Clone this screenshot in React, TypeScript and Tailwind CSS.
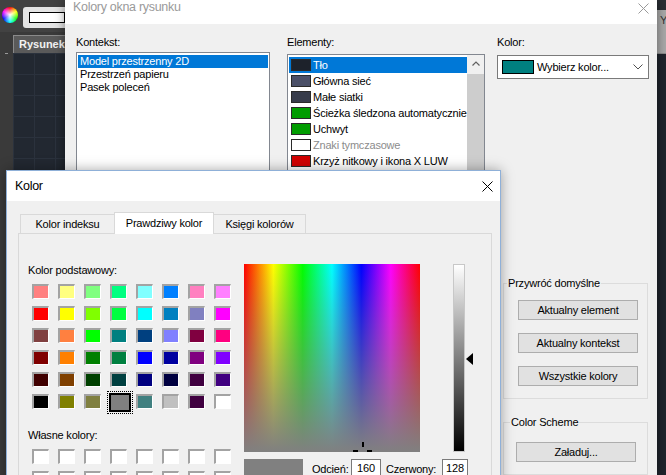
import React from 'react';

const basicColors = [
  ['#ff8080', '#ffff80', '#80ff80', '#00ff80', '#80ffff', '#0080ff', '#ff80c0', '#ff80ff'],
  ['#ff0000', '#ffff00', '#80ff00', '#00ff40', '#00ffff', '#0080c0', '#8080c0', '#ff00ff'],
  ['#804040', '#ff8040', '#00ff00', '#008080', '#004080', '#8080ff', '#800040', '#ff0080'],
  ['#800000', '#ff8000', '#008000', '#008040', '#0000ff', '#0000a0', '#800080', '#8000ff'],
  ['#400000', '#804000', '#004000', '#004040', '#000080', '#000040', '#400040', '#400080'],
  ['#000000', '#808000', '#808040', '#808080', '#408080', '#c0c0c0', '#400040', '#ffffff'],
];

const contexts = ['Model przestrzenny 2D', 'Przestrzeń papieru', 'Pasek poleceń'];

const elements = [
  { name: 'Tło', color: '#1d222b' },
  { name: 'Główna sieć', color: '#4b5068' },
  { name: 'Małe siatki', color: '#373c4b' },
  { name: 'Ścieżka śledzona automatycznie', color: '#009c00' },
  { name: 'Uchwyt', color: '#009c00' },
  { name: 'Znaki tymczasowe', color: '#ffffff', muted: true },
  { name: 'Krzyż nitkowy i ikona X LUW', color: '#d10000' },
];

const CloseIcon = ({ className }: { className?: string }) => (
  <svg width="11" height="11" viewBox="0 0 11 11" className={className}>
    <path d="M0.5 0.5 L10.5 10.5 M10.5 0.5 L0.5 10.5" stroke="currentColor" strokeWidth="1" fill="none" />
  </svg>
);

const Button = ({ children, pad }: { children: React.ReactNode; pad?: boolean }) => (
  <div className="h-[20px] w-[120px] border border-[#adadad] bg-[#e1e1e1] flex items-center justify-center">
    {children}
  </div>
);

const Backdrop = () => (
  <div className="absolute inset-0 flex">
    <div className="w-[65px] flex flex-col">
      <div className="h-[32px] flex items-start gap-[5px] pl-[2px] pt-[7px] bg-[#424242]">
        <div className="w-[16px] h-[16px] shrink-0 rounded-full bg-[radial-gradient(circle,#ffffff_0%,rgba(255,255,255,0)_70%),conic-gradient(#ff0000,#ffff00,#00ff00,#00ffff,#0000ff,#ff00ff,#ff0000)]" />
        <div className="flex-1 h-[21px] rounded-l-[3px] bg-[#e4e4e4] pl-[6px] pt-[5px]">
          <div className="h-[11px] border border-black bg-white" />
        </div>
      </div>
      <div className="flex flex-1 pt-[3px]">
        <div className="w-[13px] flex flex-col pt-[18px]">
          <div className="ml-[5px] w-[3px] h-[1px] bg-[#9a9a9a]" />
        </div>
        <div className="flex-1 flex flex-col">
          <div className="h-[18px] bg-[#5a5a5a] border-t border-l border-[#8a8a8a] text-[#f2f2f2] font-bold pl-[5px] leading-[17px] tracking-normal">
            Rysunek
          </div>
          <div className="flex-1 bg-[#222831] bg-[linear-gradient(#2b323d_1px,transparent_1px),linear-gradient(90deg,#2b323d_1px,transparent_1px)] bg-[size:21px_21px]" />
        </div>
      </div>
    </div>
    <div className="flex-1" />
    <div className="w-[9px] flex flex-col bg-[#2b2e34]">
      <div className="h-[10px]" />
      <div className="h-[43px] bg-[#a9a9a9] text-[#333] pl-[3px] pt-[4px] overflow-hidden">Y</div>
      <div className="h-[1px] bg-[#8a8a8a]" />
      <div className="flex-1 bg-[#1f242c]" />
    </div>
  </div>
);

const SettingsWindow = () => (
  <div className="absolute left-[65px] top-0 w-[592px] h-[475px] flex flex-col bg-[#f0f0f0] shadow-[0_0_10px_rgba(0,0,0,0.45)]">
    <div className="h-[24px] shrink-0 bg-white flex justify-between pl-[8px] pr-[8px]">
      <span className="text-[12.5px] leading-[15px] tracking-[-0.3px] text-[#9a9a9a]">Kolory okna rysunku</span>
      <CloseIcon className="mt-[3px] text-[#9a9a9a]" />
    </div>
    <div className="flex pl-[11px] pt-[12px]">
      <div className="w-[194px] flex flex-col">
        <span>Kontekst:</span>
        <div className="mt-[3px] h-[140px] border border-[#828790] bg-white px-[1px] pt-[2px]">
          {contexts.map((c, i) => (
            <div key={c} className={i === 0 ? 'h-[13px] pl-[2px] bg-[#0078d7] text-white' : 'h-[13px] pl-[2px]'}>
              {c}
            </div>
          ))}
        </div>
      </div>
      <div className="ml-[17px] w-[198px] flex flex-col">
        <span>Elementy:</span>
        <div className="mt-[5px] h-[140px] border border-[#828790] bg-white flex">
          <div className="flex-1 min-w-0 overflow-hidden pl-[1px] pt-[2px]">
            {elements.map((e, i) => (
              <div
                key={e.name}
                className={
                  i === 0
                    ? 'h-[16px] flex items-center pl-[2px] bg-[#0078d7] text-white'
                    : e.muted
                    ? 'h-[16px] flex items-center pl-[2px] text-[#8c8c8c]'
                    : 'h-[16px] flex items-center pl-[2px]'
                }
              >
                <div className="w-[20px] h-[12px] shrink-0 border border-[#2a2a2a]" style={{ backgroundColor: e.color }} />
                <span className="ml-[2px] whitespace-nowrap">{e.name}</span>
              </div>
            ))}
          </div>
          <div className="w-[17px] flex flex-col bg-[#f0f0f0]">
            <div className="h-[17px] flex items-center justify-center">
              <svg width="8" height="5" viewBox="0 0 8 5">
                <path d="M0.5 4.5 L4 1 L7.5 4.5" stroke="#606060" strokeWidth="1.2" fill="none" />
              </svg>
            </div>
            <div className="mt-[2px] flex-1 bg-[#cdcdcd]" />
          </div>
        </div>
      </div>
      <div className="ml-[12px] w-[152px] flex flex-col">
        <span>Kolor:</span>
        <div className="mt-[6px] h-[24px] border border-[#7a7a7a] bg-white flex items-center pl-[4px] pr-[5px]">
          <div className="w-[32px] h-[14px] border border-black bg-[#008080]" />
          <span className="ml-[3px] flex-1">Wybierz kolor...</span>
          <svg width="10" height="6" viewBox="0 0 10 6">
            <path d="M0.5 0.5 L5 5 L9.5 0.5" stroke="#505050" strokeWidth="1" fill="none" />
          </svg>
        </div>
        <fieldset className="mt-[198px] ml-[6px] w-[145px] border border-[#dcdcdc]">
          <legend className="ml-[3px] px-[1px]">Przywróć domyślne</legend>
          <div className="flex flex-col gap-[13px] pl-[14px] pt-[10px] pb-[12px]">
            <Button>Aktualny element</Button>
            <Button>Aktualny kontekst</Button>
            <Button>Wszystkie kolory</Button>
          </div>
        </fieldset>
        <fieldset className="mt-[17px] ml-[6px] w-[145px] border border-[#dcdcdc]">
          <legend className="ml-[6px] px-[1px]">Color Scheme</legend>
          <div className="pl-[12px] pt-[13px] pb-[12px]">
            <Button>Załaduj...</Button>
          </div>
        </fieldset>
      </div>
    </div>
  </div>
);

const Swatch = ({ color, selected }: { color: string; selected?: boolean }) =>
  selected ? (
    <div className="-ml-[3px] -mt-[3px] w-[26px] h-[23px] border border-dotted border-black p-[1px]">
      <div className="w-full h-full border-2 border-black" style={{ backgroundColor: color }} />
    </div>
  ) : (
    <div
      className="w-[17px] h-[15px] border-t-2 border-l-2 border-t-[#a3a3a3] border-l-[#a3a3a3] border-b border-r border-b-white border-r-white"
      style={{ backgroundColor: color }}
    />
  );

const ColorDialog = () => (
  <div className="absolute left-[6px] top-[170px] w-[495px] h-[330px] flex flex-col border border-[#8fb0d8] bg-[#f0f0f0] shadow-[0_0_12px_rgba(0,0,0,0.35)]">
    <div className="h-[30px] shrink-0 bg-white flex items-center justify-between pl-[8px] pr-[7px]">
      <span className="text-[12.5px] tracking-[-0.3px]">Kolor</span>
      <CloseIcon className="text-black" />
    </div>
    <div className="pl-[11px] pt-[11px] flex flex-col">
      <div className="relative z-10 h-[21px] flex items-end pl-[2px]">
        <div className="w-[95px] h-[19px] border border-b-0 border-[#d9d9d9] bg-[#f0f0f0] flex items-center justify-center">
          Kolor indeksu
        </div>
        <div className="-ml-[1px] -mb-[1px] w-[100px] h-[22px] border border-b-0 border-[#d9d9d9] bg-white flex items-center justify-center">
          Prawdziwy kolor
        </div>
        <div className="-ml-[1px] w-[93px] h-[19px] border border-b-0 border-[#d9d9d9] bg-[#f0f0f0] flex items-center justify-center">
          Księgi kolorów
        </div>
      </div>
      <div className="w-[474px] h-[260px] border border-[#d9d9d9] flex pl-[9px] pt-[30px]">
        <div className="w-[216px] flex flex-col">
          <span>Kolor podstawowy:</span>
          <div className="mt-[7px] ml-[4px] grid grid-cols-[repeat(8,17px)] auto-rows-[15px] gap-x-[9px] gap-y-[7px]">
            {basicColors.flatMap((row, r) =>
              row.map((c, i) => <Swatch key={`${r}-${i}`} color={c} selected={r === 5 && i === 3} />)
            )}
          </div>
          <span className="mt-[20px]">Własne kolory:</span>
          <div className="mt-[7px] ml-[4px] grid grid-cols-[repeat(8,17px)] auto-rows-[15px] gap-x-[9px] gap-y-[7px]">
            {Array.from({ length: 16 }).map((_, i) => (
              <Swatch key={i} color="#ffffff" />
            ))}
          </div>
        </div>
        <div className="flex flex-col">
          <div className="flex items-start">
            <div className="relative w-[176px] h-[188px] bg-[linear-gradient(to_bottom,rgba(128,128,128,0),#808080),linear-gradient(to_right,#ff0000,#ffff00,#00ff00,#00ffff,#0000ff,#ff00ff,#ff0000)]">
              <div className="absolute left-[118px] top-[178px] w-[2px] h-[5px] bg-black" />
              <div className="absolute left-[109px] top-[186px] w-[5px] h-[2px] bg-black" />
              <div className="absolute left-[123px] top-[186px] w-[5px] h-[2px] bg-black" />
            </div>
            <div className="ml-[33px] w-[12px] h-[188px] border border-[#c8c8c8] bg-[linear-gradient(to_bottom,#ffffff,#000000)]" />
            <svg width="8" height="12" viewBox="0 0 8 12" className="ml-[1px] mt-[89px]">
              <path d="M0 6 L7 0 L7 12 Z" fill="#000" />
            </svg>
          </div>
          <div className="mt-[7px] flex items-start">
            <div className="w-[59px] h-[22px] bg-[#808080]" />
            <span className="ml-[9px] w-[39px] pt-[4px]">Odcień:</span>
            <div className="w-[30px] h-[21px] border border-[#7a7a7a] bg-white text-center pt-[2px]">160</div>
            <span className="ml-[5px] w-[56px] pt-[4px]">Czerwony:</span>
            <div className="w-[26px] h-[21px] border border-[#7a7a7a] bg-white text-center pt-[2px]">128</div>
          </div>
        </div>
      </div>
    </div>
  </div>
);

export default function App() {
  return (
    <div className="relative w-[666px] h-[475px] overflow-hidden bg-[#3a3a3a] font-['Liberation_Sans',Arial,sans-serif] text-[11px] leading-[13px] tracking-[-0.2px] text-black">
      <Backdrop />
      <SettingsWindow />
      <ColorDialog />
    </div>
  );
}
